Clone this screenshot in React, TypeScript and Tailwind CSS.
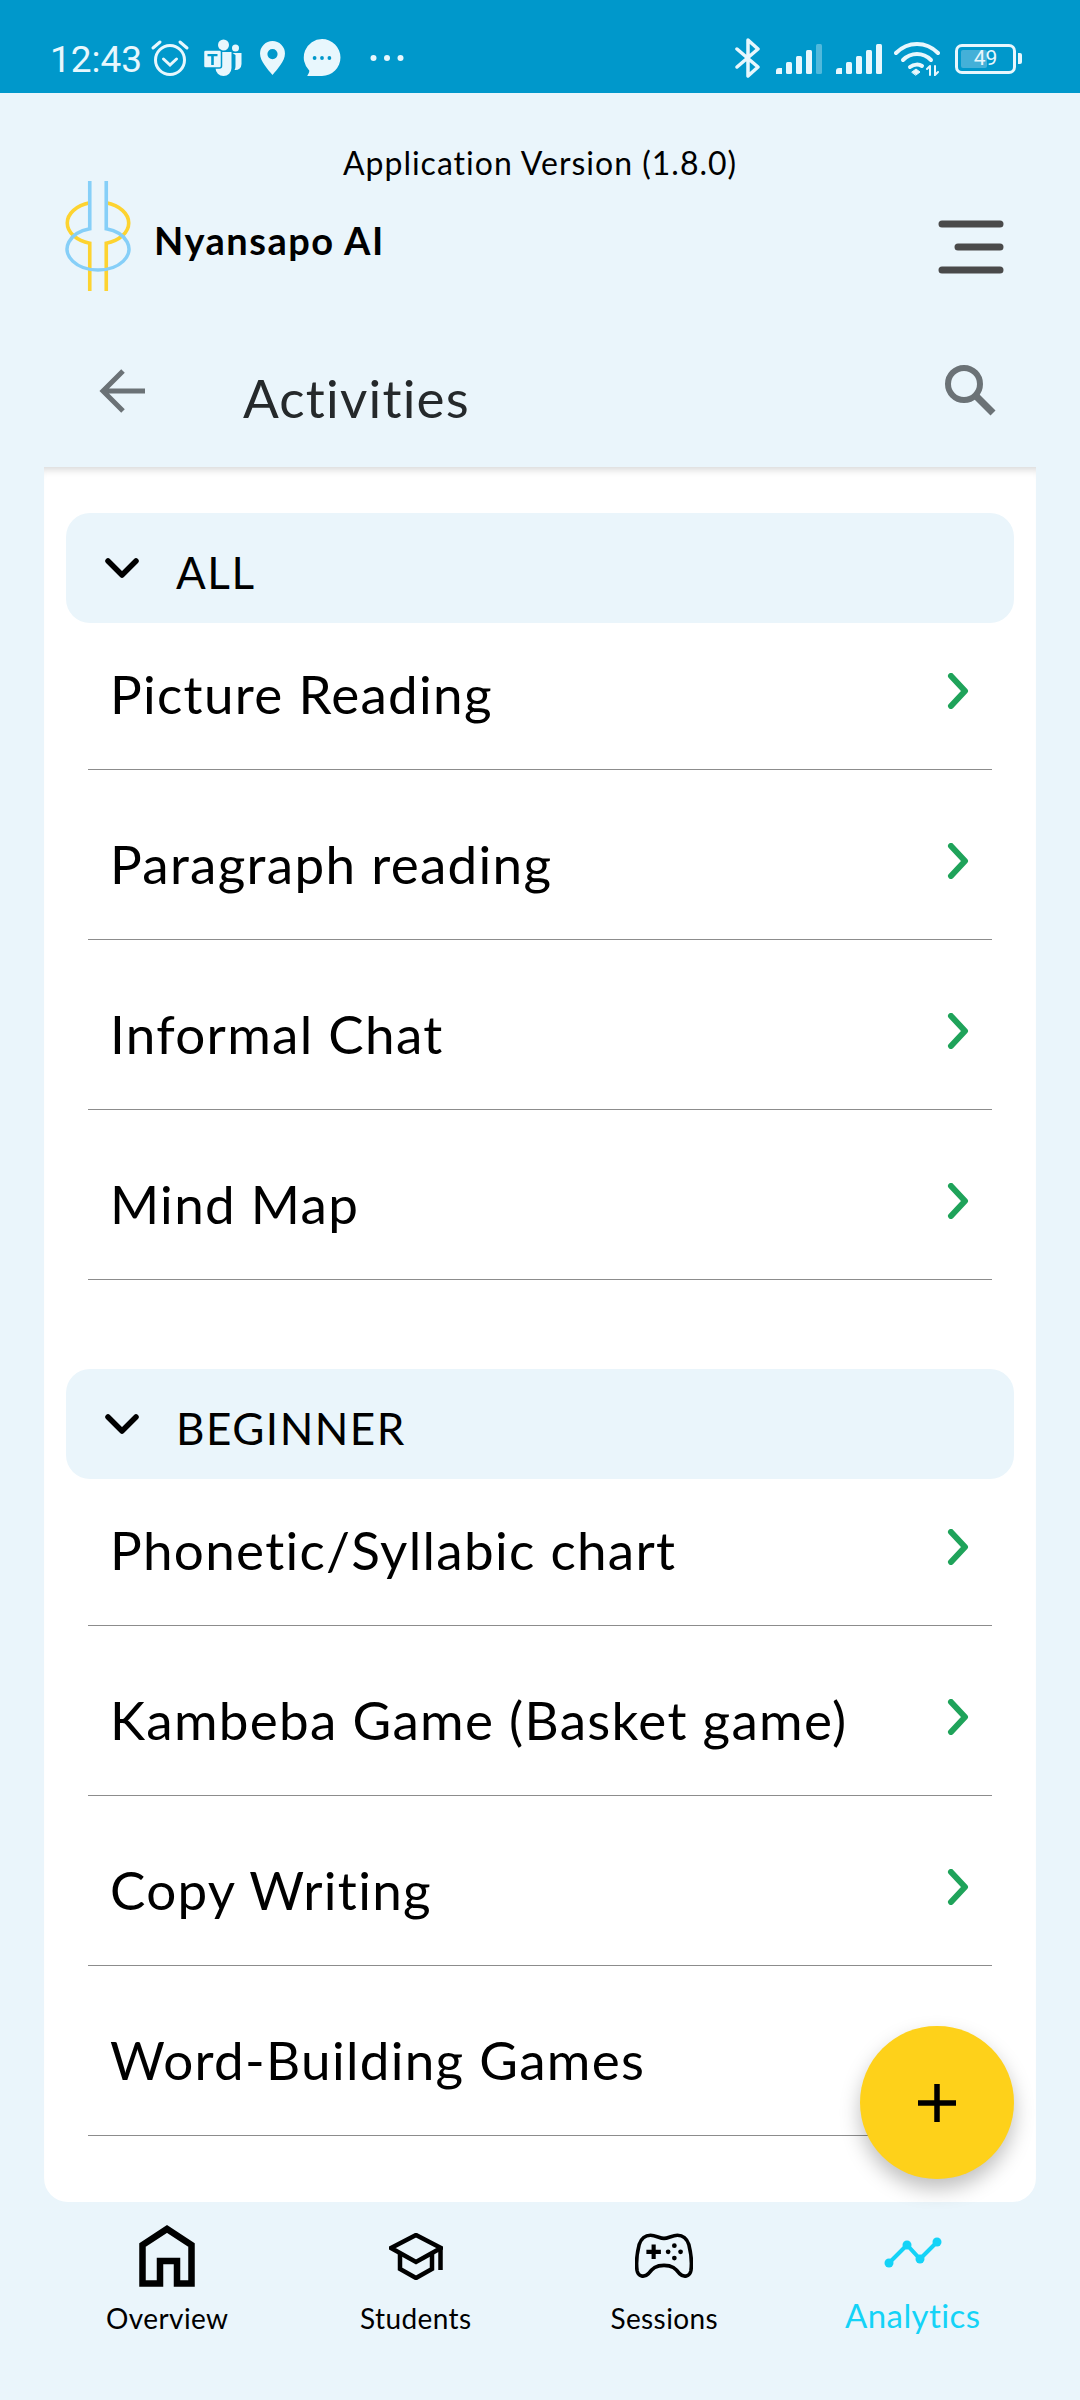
import React from 'react';

const font = { fontFamily: 'Lato, "Noto Sans", sans-serif' };

const Logo = () => (
  <svg width="66" height="110" viewBox="0 0 64 110" fill="none" strokeWidth="3.5" preserveAspectRatio="none">
    <path d="M24 21.8A30 21 0 0 0 24 62.2V110M40 21.8A30 21 0 0 1 40 62.2V110" stroke="#fdd330" />
    <path d="M24 0V47.8A30 21 0 1 0 40 47.8V0" stroke="#86cff8" />
  </svg>
);

const StatusLeft = () => (
  <div className="flex items-center">
    <span className="text-[37px] leading-[40px] text-[#e8f7fd] w-[100px] mt-[4px]" style={{ fontFamily: 'Roboto, sans-serif' }}>12:43</span>
    {/* alarm */}
    <svg width="40" height="38" viewBox="0 0 40 38" fill="none" stroke="#e8f7fd" strokeLinecap="round">
      <circle cx="20" cy="21" r="14.5" strokeWidth="3" />
      <path d="M13.5 20l6.5 6 6.5-6" strokeWidth="3" />
      <path d="M3 9l7-6M37 9l-7-6" strokeWidth="3" />
    </svg>
    {/* teams */}
    <svg className="ml-[13px]" width="39" height="38" viewBox="0 0 38 38" fill="#e8f7fd">
      <circle cx="20" cy="6" r="5.5" />
      <circle cx="32" cy="9" r="3.5" />
      <path d="M12 13h16v16a8 8 0 0 1-16 0z" />
      <path d="M29 14h9v11a6 6 0 0 1-7 6c1-2 1-3 1-5V16z" />
      <rect x="0" y="11" width="18" height="18" rx="2" stroke="#0098cb" strokeWidth="1.5" />
      <path d="M4 15h10v2.2h-3.7V26H7.700V17.200H4z" fill="#0098cb" />
    </svg>
    {/* pin */}
    <svg className="ml-[18px]" width="25" height="34" viewBox="0 0 22 30" fill="#e8f7fd">
      <path fillRule="evenodd" d="M11 0a11 11 0 0 1 11 11c0 7-7 14-11 19C7 25 0 18 0 11A11 11 0 0 1 11 0zm0 7a4.500 4.500 0 1 0 0 9 4.500 4.500 0 0 0 0-9z" />
    </svg>
    {/* chat */}
    <svg className="ml-[18px]" width="38" height="38" viewBox="0 0 36 36">
      <path d="M18 0a17.500 17.500 0 0 1 0 35H4c1-2 2-3.500 2-5A17.500 17.500 0 0 1 18 0z" fill="#e8f7fd" />
      <circle cx="11" cy="18" r="1.800" fill="#0098cb" />
      <circle cx="18" cy="18" r="1.800" fill="#0098cb" />
      <circle cx="25" cy="18" r="1.800" fill="#0098cb" />
    </svg>
    {/* more */}
    <svg className="ml-[28px]" width="36" height="8" viewBox="0 0 34 8" fill="#e8f7fd">
      <circle cx="3.500" cy="4" r="3" />
      <circle cx="17" cy="4" r="3" />
      <circle cx="30.500" cy="4" r="3" />
    </svg>
  </div>
);

const Signal = ({ faded }: { faded?: boolean }) => (
  <svg width="46" height="30" viewBox="0 0 46 30" fill="#e8f7fd">
    <path d="M0 30v-3a3 3 0 0 1 3-3h3v6z" />
    <rect x="10" y="18" width="6" height="12" rx="1.500" />
    <rect x="20" y="12" width="6" height="18" rx="1.500" />
    <rect x="30" y="6" width="6" height="24" rx="1.500" />
    <rect x="40" y="0" width="6" height="30" rx="1.500" opacity={faded ? 0.35 : 1} />
  </svg>
);

const StatusRight = () => (
  <div className="flex items-center">
    <svg width="26" height="40" viewBox="0 0 26 40" fill="none" stroke="#e8f7fd" strokeWidth="3.500" strokeLinecap="round" strokeLinejoin="round">
      <path d="M2 11l21 18-10 9V2l10 9L2 29" />
    </svg>
    <span className="ml-[15px] mt-[2px] flex"><Signal faded /></span>
    <span className="ml-[14px] mt-[2px] flex"><Signal /></span>
    <svg className="ml-[12px] mt-[2px]" width="46" height="34" viewBox="0 0 46 34" fill="none" stroke="#e8f7fd" strokeLinecap="round">
      <path d="M2 11C14-1 32-1 44 11" strokeWidth="4" />
      <path d="M9 18c8-8 20-8 28 0" strokeWidth="4" />
      <path d="M16 25c4-3 9-3 12-1" strokeWidth="4" />
      <path d="M18 30l4-3 4 3-4 3z" fill="#e8f7fd" strokeWidth="1" />
      <path d="M36 24v9M33 27l3-3M41 24v9l3-3" strokeWidth="2" />
    </svg>
    <div className="ml-[15px] mt-[2px] flex items-center">
      <div className="relative w-[61px] h-[30px] rounded-[7px] border-[3px] border-[#e8f7fd]">
        <div className="absolute left-[3px] top-[3px] bottom-[3px] w-[26px] rounded-[2px] bg-[#44b0d8]" />
        <span className="absolute inset-0 flex items-center justify-center text-[21px] leading-none text-[#e8f7fd]" style={{ fontFamily: 'Roboto, sans-serif' }}>49</span>
      </div>
      <div className="ml-[2px] w-[4px] h-[11px] rounded-r-[2px] bg-[#e8f7fd]" />
    </div>
  </div>
);

const RowChevron = () => (
  <svg width="24" height="36" viewBox="0 0 24 36" fill="none" stroke="#1fa35a" strokeWidth="6" strokeLinecap="round" strokeLinejoin="round">
    <path d="M5 3l14 15L5 33" />
  </svg>
);

const ActivityRow = ({ label, first, arrow = true }: { label: string; first?: boolean; arrow?: boolean }) => (
  <div className={`mx-[22px] flex items-end justify-between border-b-[1.5px] border-[#8c8c8c] pl-[22px] pr-[22px] pb-[50px] ${first ? 'h-[147px]' : 'h-[170px]'}`}>
    <span className="text-[53px] leading-[50px] tracking-[1.3px] text-black whitespace-nowrap">{label}</span>
    {arrow && <span className="flex mb-[10px]"><RowChevron /></span>}
  </div>
);

const Section = ({ title, items }: { title: string; items: { label: string; arrow?: boolean }[] }) => (
  <div>
    <div className="flex h-[110px] items-center rounded-[24px] bg-[#eaf5fb] pl-[39px]">
      <svg width="34" height="22" viewBox="0 0 34 22" fill="none" stroke="#000" strokeWidth="5.500" strokeLinecap="round" strokeLinejoin="round">
        <path d="M3 4l14 14L31 4" />
      </svg>
      <span className="ml-[37px] mt-[8px] text-[44px] leading-[50px] tracking-[1.5px] text-black">{title}</span>
    </div>
    {items.map((it, i) => (
      <ActivityRow key={it.label} label={it.label} first={i === 0} arrow={it.arrow} />
    ))}
  </div>
);

const NavItem = ({ label, icon, active }: { label: string; icon: React.ReactNode; active?: boolean }) => (
  <div className="flex flex-col items-center">
    <div className="flex h-[62px] items-center justify-center">{icon}</div>
    <span className={`leading-[36px] ${active ? 'mt-[10px] text-[33px] tracking-[0.4px] text-[#14d3f7]' : 'mt-[13px] text-[28px] tracking-[0.4px] text-black'}`}>{label}</span>
  </div>
);

export default function App() {
  return (
    <div className="relative flex h-[2400px] w-[1080px] flex-col overflow-hidden bg-[#eaf5fb]" style={font}>
      <div className="flex h-[93px] shrink-0 items-center justify-between bg-[#0098cb] pl-[50px] pr-[58px] pt-[22px]">
        <StatusLeft />
        <StatusRight />
      </div>

      <div className="mt-[52px] h-[36px] text-center text-[32px] leading-[36px] tracking-[1px] text-black">Application Version (1.8.0)</div>

      <div className="flex h-[110px] items-center justify-between pl-[65px] pr-[76px]">
        <div className="flex items-center">
          <Logo />
          <span className="ml-[23px] mt-[8px] text-[38px] font-bold leading-[40px] tracking-[1.5px] text-black">Nyansapo AI</span>
        </div>
        <svg className="mt-[24px]" width="66" height="56" viewBox="0 0 66 56" stroke="#4a4a4a" strokeWidth="7" strokeLinecap="round">
          <path d="M4 4h58M20 27h42M4 50h58" />
        </svg>
      </div>

      <div className="flex h-[176px] items-center justify-between pl-[99px] pr-[84px] pt-[22px]">
        <div className="flex items-center">
          <svg className="mt-[2px]" width="46" height="46" viewBox="0 0 46 46" fill="none" stroke="#6b7276" strokeWidth="5">
            <path d="M24 3L4 23l20 20M4 23h42" />
          </svg>
          <span className="ml-[98px] mt-[15px] text-[53px] leading-[60px] tracking-[1.2px] text-[#25292b]">Activities</span>
        </div>
        <svg width="52" height="52" viewBox="0 0 52 52" fill="none" stroke="#6b7276" strokeWidth="6">
          <circle cx="20" cy="20" r="16" />
          <path d="M31 31l18 18" strokeWidth="7" />
        </svg>
      </div>

      <div className="mx-[44px] flex-1 overflow-hidden rounded-b-[24px] bg-white px-[22px] pt-[46px] shadow-[inset_0_9px_8px_-7px_rgba(0,0,0,0.18)]">
        <Section
          title="ALL"
          items={[{ label: 'Picture Reading' }, { label: 'Paragraph reading' }, { label: 'Informal Chat' }, { label: 'Mind Map' }]}
        />
        <div className="h-[89px]" />
        <Section
          title="BEGINNER"
          items={[
            { label: 'Phonetic/Syllabic chart' },
            { label: 'Kambeba Game (Basket game)' },
            { label: 'Copy Writing' },
            { label: 'Word-Building Games', arrow: false },
          ]}
        />
      </div>

      <div className="grid h-[198px] shrink-0 grid-cols-4 px-[43px] pt-[23px]">
        <NavItem
          label="Overview"
          icon={
            <svg width="56" height="62" viewBox="0 0 56 62" fill="none" stroke="#000" strokeWidth="6.500">
              <path d="M3.500 58.500V20L28 4l24.500 16v38.500H38V36H21v22.500z" />
            </svg>
          }
        />
        <NavItem
          label="Students"
          icon={
            <svg width="54" height="47" viewBox="0 0 54 47" fill="none" stroke="#000" strokeWidth="4.500">
              <path d="M2 15L27 2l25 13-25 14z" />
              <path d="M11 20v16l16 9 16-9V20" />
              <path d="M51.500 15v22" />
            </svg>
          }
        />
        <NavItem
          label="Sessions"
          icon={
            <svg width="58" height="46" viewBox="0 0 56 44" fill="none" stroke="#000" strokeWidth="3.500" strokeLinejoin="round">
              <path d="M15 2c5 0 9 3 13 3s8-3 13-3c6 0 9 3 11 9 2 8 3 18 2 25-1 6-7 7-11 3-4-5-7-8-15-8s-11 3-15 8c-4 4-10 3-11-3-1-7 0-17 2-25C6 5 9 2 15 2z" />
              <path d="M11 18h14M18 11v14" strokeWidth="4" />
              <circle cx="38" cy="12" r="2.300" fill="#000" stroke="none" />
              <circle cx="38" cy="24" r="2.300" fill="#000" stroke="none" />
              <circle cx="32" cy="18" r="2.300" fill="#000" stroke="none" />
              <circle cx="44" cy="18" r="2.300" fill="#000" stroke="none" />
            </svg>
          }
        />
        <NavItem
          active
          label="Analytics"
          icon={
            <svg className="mb-[6px]" width="60" height="34" viewBox="0 0 60 34" fill="#14d3f7" stroke="#14d3f7">
              <path d="M6 27L24 9l13 14L54 6" fill="none" strokeWidth="4" />
              <circle cx="6" cy="27" r="4.500" stroke="none" />
              <circle cx="24" cy="9" r="4.500" stroke="none" />
              <circle cx="37" cy="23" r="4.500" stroke="none" />
              <circle cx="54" cy="6" r="4.500" stroke="none" />
            </svg>
          }
        />
      </div>

      <button className="absolute left-[860px] top-[2026px] flex h-[153px] w-[154px] items-center justify-center rounded-full bg-[#fed11a] shadow-[0_10px_20px_rgba(0,0,0,0.25)]">
        <svg width="40" height="40" viewBox="0 0 40 40" stroke="#000" strokeWidth="5.500">
          <path d="M20 1v38M1 20h38" />
        </svg>
      </button>
    </div>
  );
}
